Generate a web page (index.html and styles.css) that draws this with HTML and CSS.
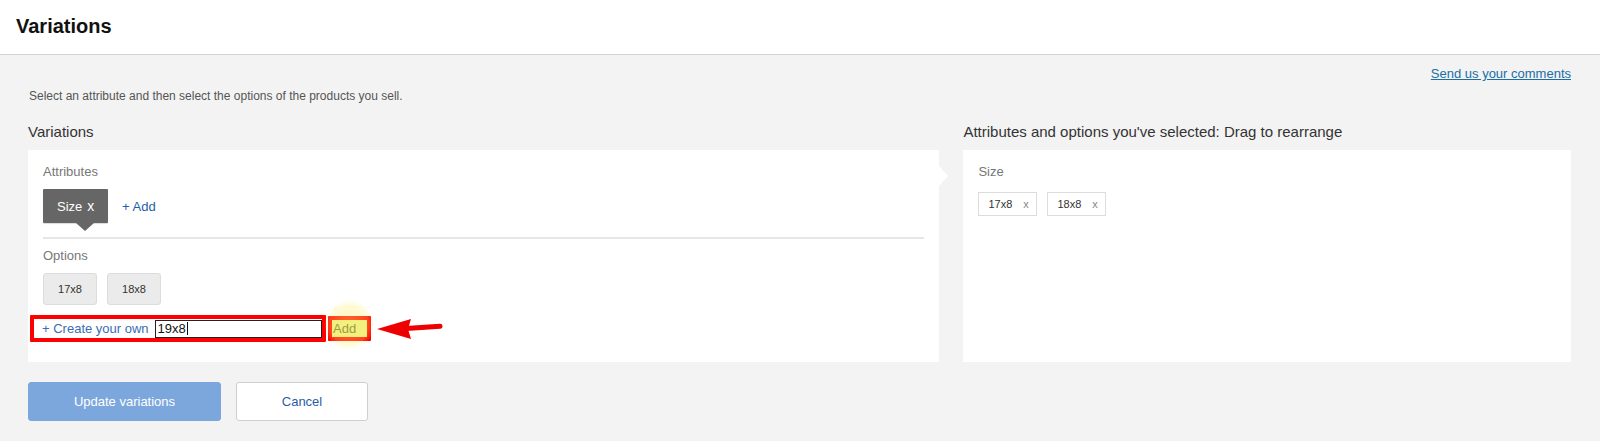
FILE: index.html
```html
<!DOCTYPE html>
<html lang="en">
<head>
<meta charset="utf-8">
<title>Variations</title>
<link rel="stylesheet" href="styles.css">
</head>
<body>
<header class="topbar">
  <h1 class="page-title">Variations</h1>
</header>
<main class="content">
  <div class="feedback"><a class="feedback-link" href="#">Send us your comments</a></div>
  <p class="intro">Select an attribute and then select the options of the products you sell.</p>
  <div class="columns">
    <section class="col">
      <h2 class="col-title">Variations</h2>
      <div class="panel panel-left">
        <div class="label">Attributes</div>
        <div class="attr-row">
          <span class="attr-tag">Size <span class="attr-x">x</span></span>
          <a class="add-link" href="#">+ Add</a>
        </div>
        <div class="sep"></div>
        <div class="label label-options">Options</div>
        <div class="opt-row">
          <span class="opt">17x8</span>
          <span class="opt">18x8</span>
        </div>
        <div class="create-row">
          <div class="mark mark-wide">
            <span class="create-link">+ Create your own</span>
            <span class="text-input">19x8<span class="caret"></span></span>
          </div>
          <div class="mark mark-add">
            <span class="glow"></span>
            <span class="add-hl">Add</span>
          </div>
          <svg class="arrow" width="68" height="22" viewBox="0 0 68 22">
            <polygon points="0,11 34,1 31,11 34,21" fill="#ee0000"/>
            <line x1="29" y1="10.5" x2="63" y2="8.2" stroke="#ee0000" stroke-width="5" stroke-linecap="round"/>
          </svg>
        </div>
      </div>
    </section>
    <section class="col">
      <h2 class="col-title">Attributes and options you've selected: Drag to rearrange</h2>
      <div class="panel panel-right">
        <div class="label">Size</div>
        <div class="chosen-row">
          <span class="chosen">17x8 <span class="chosen-x">x</span></span>
          <span class="chosen">18x8 <span class="chosen-x">x</span></span>
        </div>
      </div>
    </section>
  </div>
  <div class="actions">
    <button class="btn btn-primary" type="button">Update variations</button>
    <button class="btn btn-secondary" type="button">Cancel</button>
  </div>
</main>
</body>
</html>
```
FILE: styles.css
```css
* { box-sizing: border-box; }
html, body { margin: 0; padding: 0; }
body {
  background: #f3f3f3;
  font-family: "Liberation Sans", Arial, sans-serif;
  color: #333;
  height: 441px;
  overflow: hidden;
}
.topbar {
  height: 55px;
  background: #fff;
  border-bottom: 1px solid #d3d3d3;
  padding-left: 16px;
  display: flex;
  align-items: center;
  padding-bottom: 1px;
}
.page-title {
  margin: 0;
  font-size: 20px;
  font-weight: 700;
  color: #111;
}
.content {
  padding: 11px 29px 0 28px;
}
.feedback {
  display: flex;
  justify-content: flex-end;
  height: 16px;
  line-height: 16px;
}
.feedback-link {
  font-size: 13px;
  color: #1a6ea6;
  text-decoration: underline;
}
.intro {
  margin: 6px 0 0 1px;
  font-size: 12px;
  line-height: 16px;
  color: #555;
}
.columns {
  display: grid;
  grid-template-columns: 3fr 2fr;
  column-gap: 24px;
  margin-top: 19px;
}
.col-title {
  margin: 0 0 9px 0;
  font-size: 15px;
  font-weight: 400;
  line-height: 18px;
  color: #333;
}
.panel {
  background: #fff;
  height: 212px;
  position: relative;
}
.panel-left {
  padding: 14px 15px 0 15px;
}
.panel-left::after {
  content: "";
  position: absolute;
  right: -9px;
  top: 16px;
  border-left: 9px solid #fff;
  border-top: 10px solid transparent;
  border-bottom: 10px solid transparent;
}
.label {
  font-size: 13px;
  line-height: 16px;
  color: #777;
}
.attr-row {
  margin-top: 9px;
  display: flex;
  align-items: center;
  height: 34px;
}
.attr-tag {
  position: relative;
  display: flex;
  align-items: center;
  height: 34px;
  width: 65px;
  padding-left: 14px;
  background: #666;
  color: #fff;
  font-size: 13px;
  border-radius: 1px;
  box-shadow: 0 1px 1px rgba(0,0,0,0.15);
}
.attr-x {
  font-size: 14px;
  margin-left: 5px;
}
.attr-tag::after {
  content: "";
  position: absolute;
  left: 33px;
  top: 100%;
  border-top: 8px solid #666;
  border-left: 9px solid transparent;
  border-right: 9px solid transparent;
}
.add-link {
  margin-left: 14px;
  font-size: 13px;
  color: #1f5fa9;
  text-decoration: none;
}
.sep {
  margin-top: 14px;
  height: 2px;
  background: #e6e6e6;
}
.label-options {
  margin-top: 9px;
}
.opt-row {
  margin-top: 9px;
  display: flex;
  gap: 10px;
}
.opt {
  display: flex;
  align-items: center;
  justify-content: center;
  width: 54px;
  height: 32px;
  background: #ebebeb;
  border: 1px solid #dcdcdc;
  border-radius: 3px;
  font-size: 11px;
  color: #333;
}
.create-row {
  margin-top: 10px;
  margin-left: -13px;
  display: flex;
  align-items: center;
}
.mark {
  border: 4px solid #ff0000;
  border-radius: 1px;
  display: flex;
  align-items: center;
}
.mark-wide {
  width: 296px;
  height: 27px;
  padding-left: 8px;
}
.create-link {
  font-size: 13px;
  color: #3a6db2;
}
.text-input {
  margin-left: 6px;
  flex: 1;
  height: 18px;
  border: 1.5px solid #222;
  border-right-width: 1px;
  font-size: 13px;
  line-height: 15px;
  color: #111;
  padding-left: 2px;
  display: flex;
  align-items: center;
}
.caret {
  display: inline-block;
  width: 1px;
  height: 13px;
  background: #111;
  margin-left: 1px;
}
.mark-add {
  position: relative;
  margin-left: 2px;
  width: 43px;
  height: 25px;
}
.glow {
  position: absolute;
  left: -8px;
  top: -20px;
  width: 50px;
  height: 50px;
  border-radius: 50%;
  background: radial-gradient(circle, rgba(255,238,90,0.45) 0%, rgba(255,240,110,0.28) 55%, rgba(255,245,150,0) 72%);
  pointer-events: none;
}
.add-hl {
  position: relative;
  flex: 1;
  height: 100%;
  background: #f3f07d;
  font-size: 13px;
  color: #9c9a46;
  padding-left: 1px;
  display: flex;
  align-items: center;
}
.arrow {
  margin-left: 6px;
  margin-top: 1px;
  display: block;
}
.panel-right {
  padding: 14px 15px 0 15px;
}
.chosen-row {
  margin-top: 12px;
  display: flex;
  gap: 10px;
}
.chosen {
  display: flex;
  align-items: center;
  height: 24px;
  width: 59px;
  padding-left: 9px;
  border: 1px solid #dcdcdc;
  font-size: 11px;
  color: #333;
}
.chosen-x {
  margin-left: 11px;
  color: #888;
  font-size: 11px;
}
.actions {
  margin-top: 20px;
  display: flex;
  gap: 15px;
}
.btn {
  height: 39px;
  font-family: "Liberation Sans", Arial, sans-serif;
  font-size: 13px;
  border-radius: 3px;
  cursor: pointer;
}
.btn-primary {
  width: 193px;
  background: #7ca7dd;
  border: 1px solid #7ca7dd;
  color: #fff;
}
.btn-secondary {
  width: 132px;
  background: #fff;
  border: 1px solid #cfcfcf;
  color: #2b5ea7;
}
```
